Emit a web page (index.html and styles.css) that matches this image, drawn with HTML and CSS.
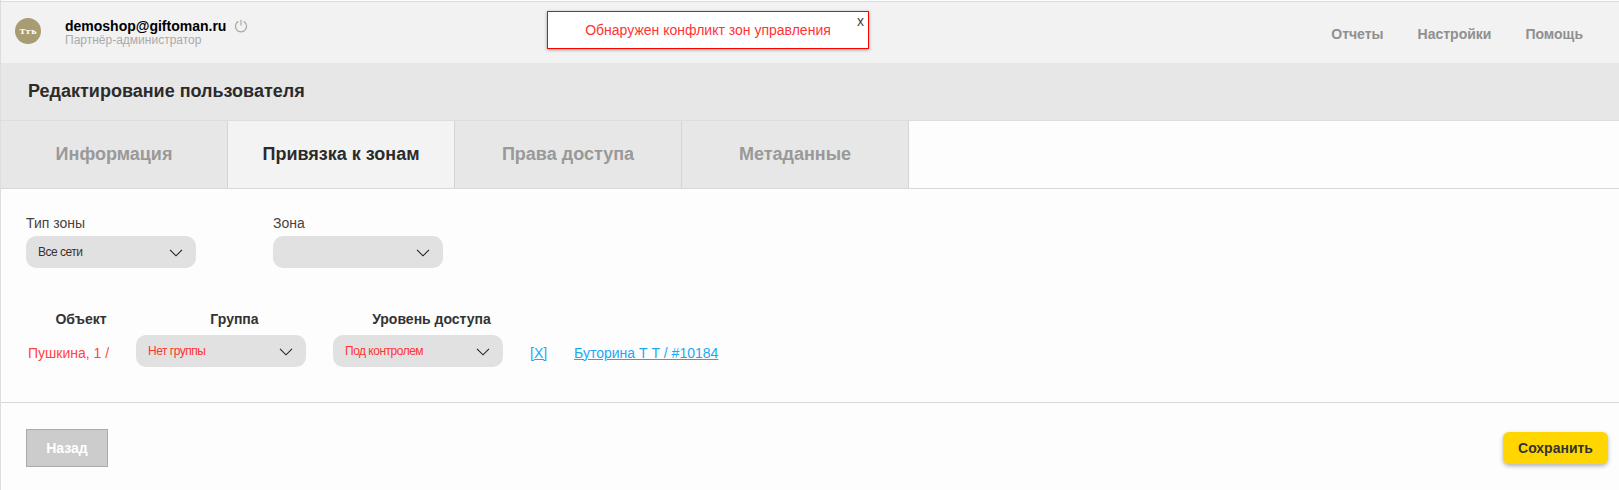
FILE: index.html
```html
<!DOCTYPE html>
<html lang="ru">
  <head>
    <meta charset="utf-8" />
    <title>Редактирование пользователя</title>
    <link rel="stylesheet" href="styles.css">
  </head>
  <body>
    <header class="topbar">
      <div class="user">
        <div class="avatar">Ттъ</div>
        <div class="user-info">
          <div class="user-line">
            <span class="user-email">demoshop@giftoman.ru</span>
            <svg class="power" width="14" height="14" viewBox="0 0 14 14" fill="none" stroke="#aaa" stroke-width="1.2">
              <path d="M4.3 2.4a5.6 5.6 0 1 0 5.4 0" />
              <path d="M7 .8v5.6" />
            </svg>
          </div>
          <div class="user-role">Партнёр-администратор</div>
        </div>
      </div>
      <nav class="topnav">
        <a>Отчеты</a>
        <a>Настройки</a>
        <a>Помощь</a>
      </nav>
    </header>

    <div class="alert">
      Обнаружен конфликт зон управления
      <span class="alert-close">x</span>
    </div>

    <h1 class="page-title">Редактирование пользователя</h1>

    <div class="tabs">
      <div class="tab">Информация</div>
      <div class="tab active">Привязка к зонам</div>
      <div class="tab">Права доступа</div>
      <div class="tab">Метаданные</div>
    </div>

    <main class="content">
      <section class="filters">
        <div class="field">
          <label>Тип зоны</label>
          <div class="select">
            <span>Все сети</span>
            <svg class="chevron" width="14" height="8" viewBox="0 0 14 8" fill="none" stroke="#222" stroke-width="1.1"><path d="M1 .8l6 6 6-6" /></svg>
          </div>
        </div>
        <div class="field">
          <label>Зона</label>
          <div class="select">
            <span></span>
            <svg class="chevron" width="14" height="8" viewBox="0 0 14 8" fill="none" stroke="#222" stroke-width="1.1"><path d="M1 .8l6 6 6-6" /></svg>
          </div>
        </div>
      </section>

      <section class="zones">
        <div class="zones-head">Объект</div>
        <div class="zones-head">Группа</div>
        <div class="zones-head">Уровень доступа</div>
        <div></div>
        <div></div>

        <div class="object-name">Пушкина, 1 /</div>
        <div class="select red">
          <span>Нет группы</span>
          <svg class="chevron" width="14" height="8" viewBox="0 0 14 8" fill="none" stroke="#222" stroke-width="1.1"><path d="M1 .8l6 6 6-6" /></svg>
        </div>
        <div class="select red">
          <span>Под контролем</span>
          <svg class="chevron" width="14" height="8" viewBox="0 0 14 8" fill="none" stroke="#222" stroke-width="1.1"><path d="M1 .8l6 6 6-6" /></svg>
        </div>
        <a class="link" href="#">[X]</a>
        <a class="link" href="#">Буторина Т Т / #10184</a>
      </section>

      <footer class="actions">
        <button class="btn-back" type="button">Назад</button>
        <button class="btn-save" type="button">Сохранить</button>
      </footer>
    </main>
  </body>
</html>
```

FILE: styles.css
```css
body {
  margin: 0;
  height: 490px;
  overflow: hidden;
  background-color: #fdfdfd;
  font-family: "Liberation Sans", Arial, sans-serif;
  color: #333;
  border-left: 1px solid #ddd;
  box-sizing: border-box;
  position: relative;
}

.topbar {
  display: flex;
  justify-content: space-between;
  height: 62px;
  box-sizing: border-box;
  margin-top: 1px;
  border-top: 1px solid #dcdcdc;
  background-color: #f2f2f2;
}

.user {
  display: flex;
  padding: 16px 0 0 14px;
}

.avatar {
  width: 26px;
  height: 26px;
  border-radius: 50%;
  background-color: #a89c72;
  color: #fff;
  font-family: "DejaVu Serif", serif;
  font-size: 8px;
  font-weight: bold;
  line-height: 26px;
  text-align: center;
}

.user-info {
  margin-left: 24px;
}

.user-line {
  display: flex;
  align-items: center;
  height: 16px;
}

.user-email {
  font-size: 14px;
  font-weight: bold;
  color: #000;
}

.power {
  margin-left: 8px;
}

.user-role {
  font-size: 12px;
  line-height: 13px;
  color: #aaa;
}

.topnav {
  display: flex;
  gap: 34px;
  padding: 24px 36px 0 0;
  font-size: 14px;
  font-weight: bold;
  line-height: 16px;
  color: #8f8f8f;
}

.alert {
  position: absolute;
  left: 546px;
  top: 11px;
  width: 322px;
  height: 38px;
  box-sizing: border-box;
  border: 1px solid #f00;
  background-color: #fff;
  box-shadow: 0 1px 3px rgba(0, 0, 0, 0.35);
  color: #f33;
  font-size: 14px;
  line-height: 36px;
  text-align: center;
}

.alert-close {
  position: absolute;
  right: 4px;
  top: 2px;
  color: #444;
  font-size: 14px;
  line-height: 14px;
}

.page-title {
  margin: 0;
  height: 58px;
  box-sizing: border-box;
  padding-left: 27px;
  border-bottom: 1px solid #ddd;
  background-color: #e7e7e7;
  color: #2b2b2b;
  font-size: 18px;
  font-weight: bold;
  line-height: 56px;
}

.tabs {
  display: flex;
  height: 68px;
  box-sizing: border-box;
  border-bottom: 1px solid #d9d9d9;
}

.tab {
  width: 227px;
  box-sizing: border-box;
  border-right: 1px solid #d4d4d4;
  background-color: #e7e7e7;
  color: #999;
  font-size: 18px;
  font-weight: bold;
  line-height: 67px;
  text-align: center;
}

.tab.active {
  background-color: #f3f3f3;
  color: #2b2b2b;
}

.content {
  padding-top: 26px;
}

.filters {
  display: flex;
  gap: 77px;
  padding-left: 25px;
}

.field label {
  display: block;
  height: 21px;
  font-size: 14px;
  line-height: 16px;
  color: #444;
}

.select {
  display: flex;
  align-items: center;
  justify-content: space-between;
  width: 170px;
  height: 32px;
  box-sizing: border-box;
  padding: 0 13px 0 12px;
  border-radius: 10px;
  background-color: #e1e1e1;
  font-size: 12px;
  letter-spacing: -0.5px;
  color: #333;
}

.select span {
  margin-top: -1px;
}

.select.red {
  color: #f33;
}

.chevron {
  margin-top: 2px;
}

.zones {
  display: grid;
  grid-template-columns: 110px 197px 197px 44px auto;
  align-items: center;
  margin-top: 43px;
  padding: 0 0 35px 25px;
  border-bottom: 1px solid #d8d8d8;
}

.zones-head {
  height: 24px;
  font-size: 14px;
  font-weight: bold;
  line-height: 16px;
  text-align: center;
  color: #333;
}

.object-name {
  margin-top: 3px;
  padding-left: 2px;
  font-size: 14px;
  color: #f44;
}

.link {
  margin-top: 3px;
  font-size: 14px;
  color: #1aa9f5;
  justify-self: start;
}

.actions {
  display: flex;
  justify-content: space-between;
  align-items: flex-start;
  padding: 26px 11px 0 25px;
}

.btn-back {
  width: 82px;
  height: 38px;
  border: 1px solid #aaa;
  background-color: #ccc;
  color: #fff;
  font-family: inherit;
  font-size: 14px;
  font-weight: bold;
}

.btn-save {
  width: 105px;
  height: 32px;
  margin-top: 3px;
  border: 0;
  border-radius: 6px;
  background-color: #ffd600;
  box-shadow: 0 2px 4px rgba(0, 0, 0, 0.3);
  color: #333;
  font-family: inherit;
  font-size: 14px;
  font-weight: bold;
}
```
